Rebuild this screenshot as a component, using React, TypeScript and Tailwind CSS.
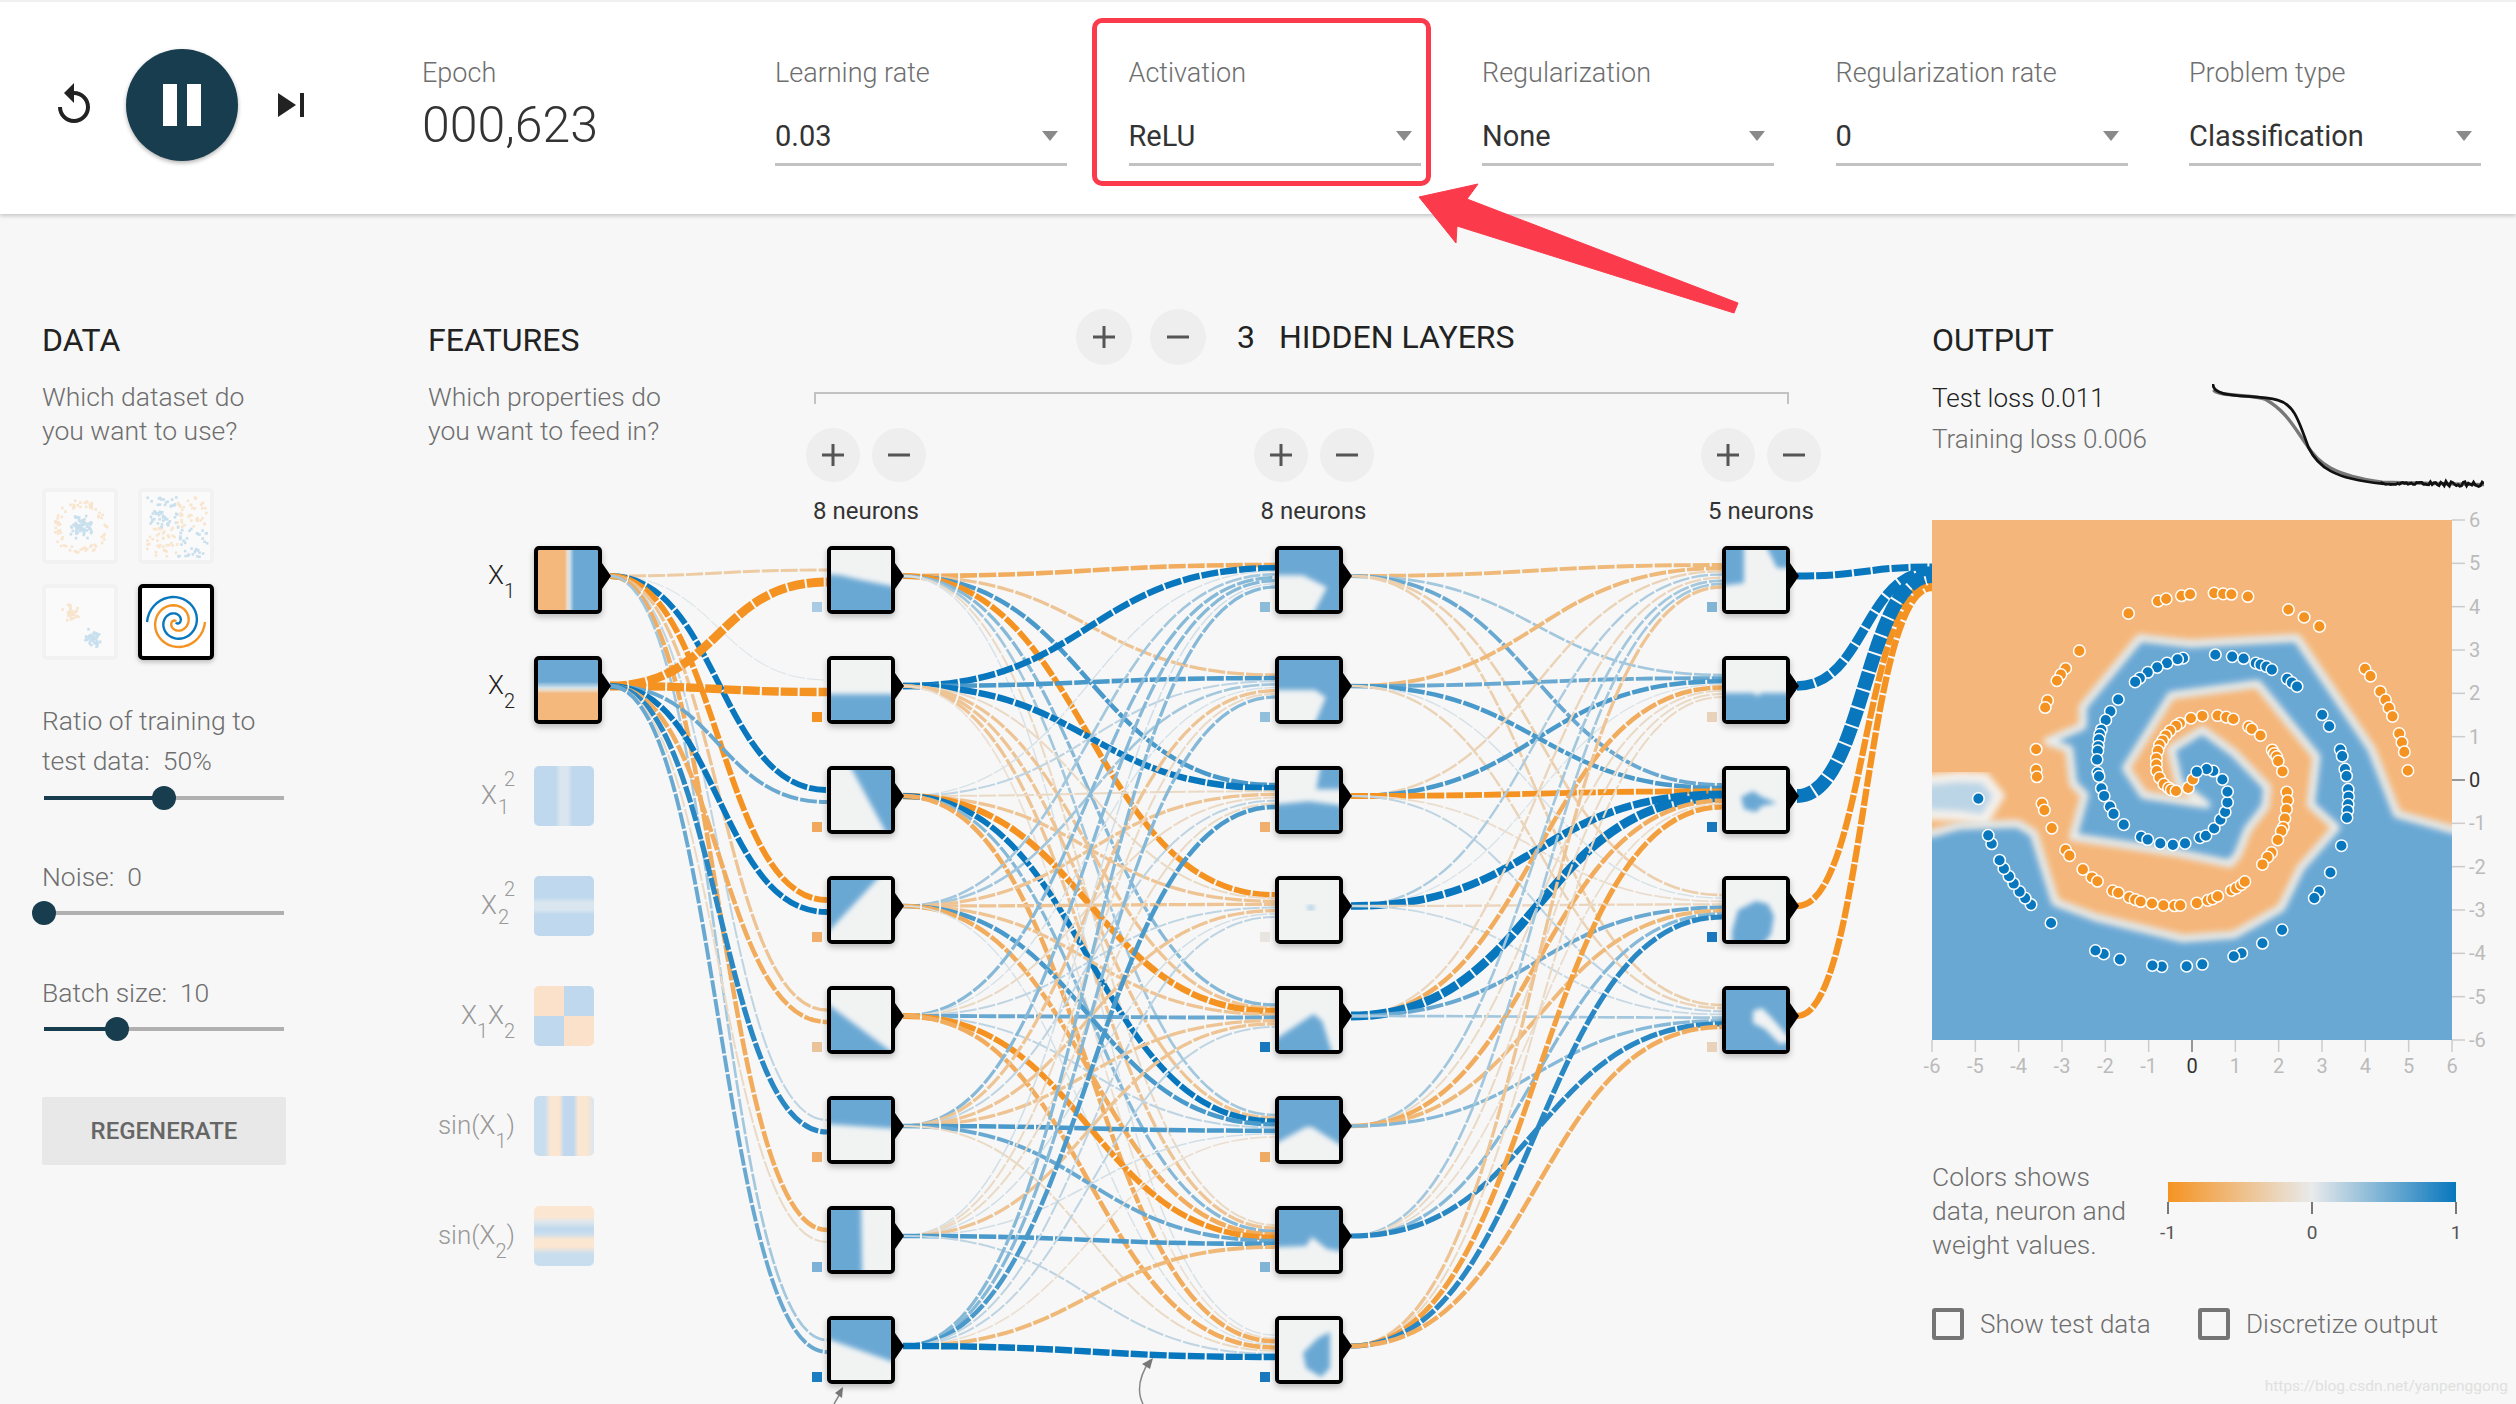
import type { ReactNode } from 'react';

// page coordinates of the network canvas
const OX = 428;
const OY = 530;
const ROWS = [580, 690, 800, 910, 1020, 1130, 1240, 1350];
const COLS = [827, 1275, 1722];
const ORANGE = [245, 147, 34];
const BLUE = [8, 119, 189];
const GREY = [232, 234, 235];

const weightsIn = [
  [-1.7, 0.3, 4, -4, -2, 1, -3, 1.5],
  [-6.5, -6, 2.5, 4, -3, 3.5, -1, 2.5],
];
const weightsA = [
  [-3, -2, 3, -4, 2, 1.5, -1, 0.5],
  [4.5, 3, 4.5, -1, -2, -2, -2, -0.7],
  [0.5, 1, -1, -2, -4.5, 4, 2, -3],
  [1.5, 1.5, -2, -2, -2, 3, -3, 0.5],
  [2, 0.5, -1, 1, 2.5, 1, -4, -3],
  [2, -2, 1, -2, -2, 3, 2.5, -1],
  [0.6, -1, -1, 0.6, -2, 0.6, 3, 1],
  [2, 2, 3, 1, 1, -0.7, -2.5, 4.5],
];
const weightsB = [
  [-2.5, 1.5, 2.5, -1.5, -1.5],
  [-2.5, 2.5, 3, 0.5, -1.3],
  [-1.3, 3, -4, -0.8, 1],
  [1.3, 0.4, 5.5, -1.2, 0.8],
  [-1.2, -3, 6.5, 2.5, 1.5],
  [1.5, -1, -3, -2.5, 2],
  [1.5, -1, -0.8, 2, 3.5],
  [-2, -1, -3.5, 3.5, -3],
];

const firstCol = [
  { bias: 'bg-[#a9cbe3]', poly: '0,40 15,42 50,50 100,62 100,100 0,100' },
  { bias: 'bg-[#f59322]', poly: '0,57 100,57 100,100 0,100' },
  { bias: 'bg-[#f0a85f]', poly: '30,0 100,0 100,100 95,100' },
  { bias: 'bg-[#f0ae6a]', poly: '0,0 85,0 0,92' },
  { bias: 'bg-[#e9c49b]', poly: '0,20 100,100 0,100' },
  { bias: 'bg-[#f0ae6a]', poly: '0,0 100,0 100,48 0,40' },
  { bias: 'bg-[#7db1d7]', poly: '0,0 50,0 52,100 0,100' },
  { bias: 'bg-[#1a7ec0]', poly: '0,0 100,0 100,72 0,30' },
];
const secondCol = [
  { bias: 'bg-[#8dbcd9]', poly: '0,42 40,42 80,62 55,100 0,100', invert: true },
  { bias: 'bg-[#92bfdc]', poly: '0,50 60,50 78,62 58,100 0,100', invert: true },
  { bias: 'bg-[#efb06f]', poly: '0,58 50,52 100,60 100,100 0,100', extra: '70,0 100,0 100,32 62,32' },
  { bias: 'bg-[#e8e4df]', poly: '46,46 53,43 60,46 53,50' },
  { bias: 'bg-[#1877bd]', poly: '0,85 50,45 58,40 72,52 90,100 0,100' },
  { bias: 'bg-[#efab64]', poly: '0,75 45,45 55,45 100,80 100,100 0,100', invert: true },
  { bias: 'bg-[#82b4d6]', poly: '0,0 100,0 100,70 80,65 55,45 45,60 0,62' },
  { bias: 'bg-[#1877bd]', poly: '40,55 65,30 85,20 85,80 70,95 45,80' },
];
const thirdCol = [
  { bias: 'bg-[#82b4d6]', poly: '0,0 30,0 30,55 0,60', extra: '65,0 100,0 100,30 85,30' },
  { bias: 'bg-[#e8d2ba]', poly: '0,55 45,55 52,60 60,55 100,55 100,100 0,100' },
  { bias: 'bg-[#1877bd]', poly: '25,45 45,35 60,45 85,55 60,60 50,70 30,65' },
  { bias: 'bg-[#1877bd]', poly: '10,85 20,50 50,35 70,40 80,60 75,90 60,100 10,100' },
  { bias: 'bg-[#e8d2ba]', poly: '45,35 60,30 75,45 100,85 90,90 65,65 45,55', invert: true },
];

const inactive = [
  { cy: 796, bg: 'bg-[linear-gradient(to_right,#c0d8ed_36%,#d9e6ef_44%,#d9e6ef_56%,#c0d8ed_64%)]' },
  { cy: 906, bg: 'bg-[linear-gradient(to_bottom,#c0d8ed_36%,#d9e6ef_44%,#d9e6ef_56%,#c0d8ed_64%)]' },
  { cy: 1016, bg: 'bg-[conic-gradient(#c0d8ed_0_25%,#fbe1c9_25%_50%,#c0d8ed_50%_75%,#fbe1c9_75%)]' },
  { cy: 1126, bg: 'bg-[linear-gradient(to_right,#c8deef_18%,#fbe6d2_28%,#fbe6d2_42%,#c0d8ed_50%,#c0d8ed_66%,#fbe6d2_74%,#fbe6d2_88%,#d8e6ef_100%)]' },
  { cy: 1236, bg: 'bg-[linear-gradient(to_bottom,#fbe6d2_18%,#dfe7ec_26%,#c0d8ed_38%,#c8deef_46%,#fbe6d2_56%,#fbe6d2_68%,#c8deef_80%,#c8deef_100%)]' },
];

const orangeDots = [
  [581,296],[656,264],[677,258],[716,250],[738,246],[799,243],[822,245],[843,246],[885,252],[988,286],[1028,306],[1067,330],[1183,441],[1197,460],[1222,500],[1235,522],[1244,543],[1253,565],[1270,610],[1277,633],[1283,658],[1292,707],
  [456,394],[421,440],[409,456],[399,472],[375,524],[369,542],[346,651],[346,705],[348,723],[361,793],[367,810],[386,857],[421,914],[431,929],[465,965],[488,986],[502,996],[541,1021],[555,1026],[583,1038],[598,1044],[612,1049],[641,1054],[670,1059],[698,1060],[713,1059],[755,1053],[783,1046],[795,1042],[808,1035],[843,1020],[855,1014],[868,1005],[877,997],
  [769,564],[740,570],[808,563],[830,567],[848,572],[887,592],[895,598],[917,615],[947,653],[952,662],[958,670],[962,682],[973,709],[984,763],[986,785],[983,808],[979,832],[975,855],[970,865],[961,888],[945,921],[935,933],[922,952],[712,583],[702,590],[687,603],[676,615],[668,628],[660,640],[656,655],[652,675],[652,691],[653,708],[660,725],[671,742],[683,752],[690,757],[702,760],[733,752],[745,730],
];
const blueDots = [
  [802,404],[845,409],[874,414],[905,426],[917,430],[932,435],[946,443],[985,467],[997,477],[1010,487],[1074,561],[1092,591],[1120,652],[1125,669],[1132,703],[1136,721],[1140,756],[1141,775],[1140,795],[1139,811],[1137,830],[1123,903],[1095,973],[1066,1023],[1054,1040],[972,1123],[922,1158],[869,1184],[849,1192],[769,1213],[729,1218],[666,1219],[642,1216],[559,1200],[518,1186],[497,1177],[384,1105],[333,1057],[318,1040],[304,1023],[289,1002],[277,983],[264,963],[253,941],[233,898],[224,876],[199,780],
  [720,413],[706,416],[679,426],[654,437],[630,450],[610,465],[598,475],[555,521],[535,552],[523,575],[512,600],[508,612],[506,625],[504,643],[503,655],[501,678],[503,712],[506,722],[512,753],[519,773],[534,801],[543,820],[569,848],[613,880],[630,887],[662,897],[694,901],[725,897],[763,882],[778,877],[799,858],[815,835],[827,815],[833,790],[833,762],[820,730],[797,708],[780,703],[755,710],
];
const HEAT_BLUE =
  '-40,1500 -40,880 81,870 150,850 300,845 340,870 395,1050 500,1090 720,1145 850,1135 970,1065 1020,960 1110,855 1045,795 1060,670 910,480 690,510 575,700 620,770 780,795 710,740 690,650 770,600 850,660 935,750 930,800 885,860 860,925 840,950 700,920 440,880 470,770 440,740 430,650 375,630 465,590 465,540 610,360 740,375 1010,360 1200,650 1265,820 1405,860 1500,880 1500,1500';

function rng(seed: number) {
  let s = seed;
  return () => {
    s = (s * 16807) % 2147483647;
    return (s - 1) / 2147483646;
  };
}

function mix(w: number) {
  const base = w < 0 ? ORANGE : BLUE;
  const t = Math.min(Math.pow(Math.abs(w) / 4, 1.2), 1);
  const c = base.map((v, i) => Math.round(GREY[i] + (v - GREY[i]) * t));
  return `rgb(${c[0]},${c[1]},${c[2]})`;
}

function Link({ x1, y1, x2, y2, w }: { x1: number; y1: number; x2: number; y2: number; w: number }) {
  const mx = (x1 + x2) / 2;
  return (
    <path
      d={`M${x1} ${y1}C${mx} ${y1},${mx} ${y2},${x2} ${y2}`}
      fill="none"
      stroke={mix(w)}
      strokeWidth={0.8 + Math.abs(w) * 1.25}
      strokeDasharray="17 2"
    />
  );
}

function NetworkLinks() {
  const links: ReactNode[] = [];
  [580, 690].forEach((cy, i) => {
    weightsIn[i].forEach((w, j) => {
      links.push(<Link key={`i${i}${j}`} x1={610} y1={cy - 4} x2={COLS[0]} y2={ROWS[j] - 10 + i * 12} w={w} />);
    });
  });
  weightsA.forEach((row, i) => {
    row.forEach((w, j) => {
      links.push(
        <Link key={`a${i}${j}`} x1={COLS[0] + 76} y1={ROWS[i] - 4} x2={COLS[1]} y2={ROWS[j] - 15 + (i * 22) / 7} w={w} />
      );
    });
  });
  weightsB.forEach((row, i) => {
    row.forEach((w, j) => {
      links.push(
        <Link key={`b${i}${j}`} x1={COLS[1] + 76} y1={ROWS[i] - 4} x2={COLS[2]} y2={ROWS[j] - 15 + (i * 22) / 7} w={w} />
      );
    });
  });
  const out = [
    { i: 3, y: 583, w: -4.4 },
    { i: 4, y: 588, w: -4.4 },
    { i: 0, y: 567, w: 5 },
    { i: 1, y: 571, w: 7 },
    { i: 2, y: 576, w: 10.5 },
  ];
  out.forEach((o) => {
    links.push(<Link key={`o${o.i}`} x1={COLS[2] + 75} y1={ROWS[o.i] - 4} x2={1932} y2={o.y} w={o.w} />);
  });
  return (
    <svg
      className="absolute left-0 top-0 overflow-visible"
      width={1504}
      height={874}
      viewBox={`${OX} ${OY} 1504 874`}
    >
      <defs>
        <filter id="thumb-blur" x="-20%" y="-20%" width="140%" height="140%">
          <feGaussianBlur stdDeviation="4" />
        </filter>
      </defs>
      {links}
      <path d="M1143 1404C1136 1390 1140 1375 1150 1360" fill="none" stroke="#888" strokeWidth="1.5" />
      <polygon points="1153,1358 1142,1364 1150,1369" fill="#777" />
      <path d="M834 1404L841 1392" fill="none" stroke="#888" strokeWidth="1.5" />
      <polygon points="843,1387 835,1393 842,1398" fill="#777" />
    </svg>
  );
}

function wide(points: string) {
  return points
    .split(' ')
    .map((p) =>
      p
        .split(',')
        .map((v) => (v === '0' ? '-10' : v === '100' ? '110' : v))
        .join(',')
    )
    .join(' ');
}

function Tip({ cy }: { cy: number }) {
  return (
    <svg className="absolute left-full" style={{ top: cy }} width="10" height="26" viewBox="0 0 10 26">
      <polygon points="0,0 9,13 0,26" fill="#000" />
    </svg>
  );
}

type Thumb = { bias: string; poly: string; extra?: string; invert?: boolean };

function HiddenNode({ x, cy, node }: { x: number; cy: number; node: Thumb }) {
  return (
    <div className="absolute h-[68px] w-[68px]" style={{ left: x - OX, top: cy - 34 - OY }}>
      <div className={`absolute bottom-[2px] left-[-15px] h-[10px] w-[10px] ${node.bias}`} />
      <div className="h-full w-full overflow-hidden rounded-[5px] border-[4px] border-black bg-[#f1f3f3] shadow-[0_3px_6px_rgba(0,0,0,0.25)]">
        <svg width="60" height="60" viewBox="0 0 100 100" className="block">
          <rect width="100" height="100" fill={node.invert ? '#6ba8d4' : '#f1f3f3'} />
          <polygon
            points={wide(node.poly)}
            fill={node.invert ? '#f1f3f3' : '#6ba8d4'}
            filter="url(#thumb-blur)"
          />
          {node.extra && <polygon points={wide(node.extra)} fill="#6ba8d4" filter="url(#thumb-blur)" />}
        </svg>
      </div>
      <Tip cy={17} />
    </div>
  );
}

function Sub({ children, low = 16, left = 0 }: { children: ReactNode; low?: number; left?: number }) {
  return (
    <span className="relative text-[20px]" style={{ top: low, left }}>
      {children}
    </span>
  );
}

function FeatureLabel({ cy, active, children }: { cy: number; active?: boolean; children: ReactNode }) {
  return (
    <div
      className={`absolute flex h-[40px] w-[100px] items-center justify-end whitespace-nowrap text-[26px] leading-none ${
        active ? 'text-[#222]' : 'text-[#999]'
      }`}
      style={{ left: 415 - OX, top: cy - 20 - OY - 5 }}
    >
      {children}
    </div>
  );
}

function Stacked({ sub }: { sub: string }) {
  return (
    <span className="relative inline-block h-[40px] w-[18px] text-[20px]">
      <span className="absolute right-0 top-[-6px]">2</span>
      <span className="absolute left-[1px] top-[22px]">{sub}</span>
    </span>
  );
}

function Features() {
  return (
    <>
      <FeatureLabel cy={580} active>
        X<Sub>1</Sub>
      </FeatureLabel>
      <FeatureLabel cy={690} active>
        X<Sub>2</Sub>
      </FeatureLabel>
      <FeatureLabel cy={800}>
        X<Stacked sub="1" />
      </FeatureLabel>
      <FeatureLabel cy={910}>
        X<Stacked sub="2" />
      </FeatureLabel>
      <FeatureLabel cy={1020}>
        X<Sub>1</Sub>X<Sub>2</Sub>
      </FeatureLabel>
      <FeatureLabel cy={1130}>
        sin(X<Sub>1</Sub>)
      </FeatureLabel>
      <FeatureLabel cy={1240}>
        sin(X<Sub>2</Sub>)
      </FeatureLabel>
      {[580, 690].map((cy) => (
        <div key={cy} className="absolute h-[68px] w-[68px]" style={{ left: 534 - OX, top: cy - 34 - OY }}>
          <div
            className={`h-full w-full rounded-[5px] border-[4px] border-black shadow-[0_3px_6px_rgba(0,0,0,0.25)] ${
              cy === 580
                ? 'bg-[linear-gradient(to_right,#f4b77c_44%,#ebdccb_49%,#cfe0ea_53%,#6ba8d4_60%)]'
                : 'bg-[linear-gradient(to_bottom,#6ba8d4_36%,#cfe0ea_46%,#ebdccb_50%,#f4b77c_56%)]'
            }`}
          />
          <Tip cy={17} />
        </div>
      ))}
      {inactive.map((f) => (
        <div
          key={f.cy}
          className={`absolute h-[60px] w-[60px] rounded-[5px] ${f.bg}`}
          style={{ left: 534 - OX, top: f.cy - 30 - OY }}
        />
      ))}
    </>
  );
}

function Slider({ value }: { value: number }) {
  return (
    <div className="relative ml-[2px] h-[24px] w-[240px]">
      <div className="absolute left-0 right-0 top-[10px] h-[4px] bg-[#b0b0b0]" />
      <div className="absolute left-0 top-[10px] h-[4px] bg-[#183d4e]" style={{ width: value }} />
      <div className="absolute top-0 h-[24px] w-[24px] rounded-full bg-[#183d4e]" style={{ left: value - 12 }} />
    </div>
  );
}

function Select({ label, value, children }: { label: string; value: string; children?: ReactNode }) {
  return (
    <div className="relative w-[292px] pt-[51px]">
      {children}
      <div className="h-[40px] text-[27px] leading-[40px] text-[#6e6e6e]">{label}</div>
      <div className="mt-[23px] flex h-[50px] items-center justify-between border-b-[3px] border-[#c2c2c2] pb-[7px] pr-[9px]">
        <span className="text-[29px] font-normal leading-none text-[#333]">{value}</span>
        <svg width="16" height="10" viewBox="0 0 16 10">
          <polygon points="0,0 16,0 8,10" fill="#8a8a8a" />
        </svg>
      </div>
    </div>
  );
}

function RoundButton({ sign, size }: { sign: 'plus' | 'minus'; size: string }) {
  return (
    <div className={`flex items-center justify-center rounded-full bg-[#eeeeee] ${size}`}>
      <svg width="26" height="26" viewBox="0 0 26 26">
        <rect x="2" y="11.5" width="22" height="3" fill="#555" />
        {sign === 'plus' && <rect x="11.5" y="2" width="3" height="22" fill="#555" />}
      </svg>
    </div>
  );
}

function LayerControl({ count }: { count: string }) {
  return (
    <div className="flex w-[132px] shrink-0 flex-col items-center">
      <div className="flex gap-[12px]">
        <RoundButton sign="plus" size="h-[54px] w-[54px]" />
        <RoundButton sign="minus" size="h-[54px] w-[54px]" />
      </div>
      <div className="mt-[15px] text-[24px] font-normal leading-[28px] text-[#333]">{count}</div>
    </div>
  );
}

function DataThumb({ kind }: { kind: 'circle' | 'xor' | 'gauss' | 'spiral' }) {
  const r = rng(kind.length * 97 + 11);
  const dots: { x: number; y: number; c: string }[] = [];
  if (kind === 'circle') {
    for (let i = 0; i < 150; i++) {
      const a = r() * Math.PI * 2;
      const inner = i % 2 === 0;
      const d = inner ? r() * 13 : 20 + r() * 7;
      dots.push({ x: 33 + d * Math.cos(a), y: 34 + d * Math.sin(a), c: inner ? '#0877bd' : '#f59322' });
    }
  }
  if (kind === 'xor') {
    for (let i = 0; i < 170; i++) {
      const x = 4 + r() * 60;
      const y = 4 + r() * 60;
      dots.push({ x, y, c: (x < 34) === (y < 34) ? '#0877bd' : '#f59322' });
    }
  }
  if (kind === 'gauss') {
    for (let i = 0; i < 90; i++) {
      const a = r() * Math.PI * 2;
      const d = r() * 10;
      const left = i % 2 === 0;
      dots.push({
        x: (left ? 24 : 46) + d * Math.cos(a),
        y: (left ? 24 : 48) + d * Math.sin(a),
        c: left ? '#f59322' : '#0877bd',
      });
    }
  }
  if (kind === 'spiral') {
    const arm = (delta: number) =>
      Array.from({ length: 70 }, (_, i) => {
        const p = (i + 1) / 70;
        const t = 1.75 * p * 2 * Math.PI + delta;
        return `${34 + 29 * p * Math.sin(t)},${34 + 29 * p * Math.cos(t)}`;
      }).join(' ');
    return (
      <div className="h-[76px] w-[76px] rounded-[5px] border-[4px] border-black bg-white shadow-[0_2px_5px_rgba(0,0,0,0.25)]">
        <svg width="68" height="68" viewBox="0 0 68 68">
          <polyline points={arm(0)} fill="none" stroke="#0877bd" strokeWidth="2.4" />
          <polyline points={arm(Math.PI)} fill="none" stroke="#f59322" strokeWidth="2.4" />
        </svg>
      </div>
    );
  }
  return (
    <div className="h-[76px] w-[76px] rounded-[5px] border-[4px] border-[#f2f2f2] bg-[#fafafa]">
      <svg width="68" height="68" viewBox="0 0 68 68" opacity="0.2">
        {dots.map((d, i) => (
          <rect key={i} x={d.x} y={d.y} width="2.6" height="2.6" fill={d.c} />
        ))}
      </svg>
    </div>
  );
}

function LossChart() {
  const r = rng(41);
  const noise = Array.from({ length: 60 }, (_, i) => {
    const x = 1400 + i * 2.15;
    const amp = 4 + (i / 60) * 16;
    return `L${x} ${1449 + (r() - 0.5) * amp}`;
  }).join('');
  return (
    <svg width="272" height="105" viewBox="1188 1152 339 313" preserveAspectRatio="none" className="mt-[6px] block">
      <path
        d="M1190 1170C1194 1190 1240 1182 1255 1198C1280 1232 1290 1280 1305 1330C1320 1390 1340 1425 1400 1445L1527 1452"
        fill="none"
        stroke="#777"
        strokeWidth="3.4"
        vectorEffect="non-scaling-stroke"
      />
      <path
        d={`M1189 1152C1190 1200 1240 1180 1270 1200C1290 1212 1296 1260 1308 1340C1320 1400 1340 1435 1400 1449${noise}`}
        fill="none"
        stroke="#111"
        strokeWidth="2.8"
        vectorEffect="non-scaling-stroke"
      />
    </svg>
  );
}

const px = (zx: number) => (zx - 81) / 2.545;
const py = (zy: number) => (zy - 52) / 2.613;

function HeatMap() {
  const ticks = [-6, -5, -4, -3, -2, -1, 0, 1, 2, 3, 4, 5, 6];
  return (
    <svg width="584" height="562" viewBox="0 0 584 562" className="block overflow-visible">
      <defs>
        <filter id="heat-soft" x="-10%" y="-10%" width="120%" height="120%">
          <feGaussianBlur stdDeviation="8" />
        </filter>
        <filter id="heat-edge" x="-10%" y="-10%" width="120%" height="120%">
          <feGaussianBlur stdDeviation="8" />
        </filter>
      </defs>
      <svg x="0" y="0" width="520" height="520" viewBox="81 52 1324 1358" preserveAspectRatio="none">
        <rect x="0" y="0" width="1500" height="1500" fill="#f4b67a" />
        <polygon
          points="20,735 150,722 215,725 252,772 215,835 150,825 20,820"
          fill="#bcd5e6"
          stroke="#f4f1ec"
          strokeWidth="26"
          filter="url(#heat-edge)"
        />
        <polygon points={HEAT_BLUE} fill="#6ba8d4" filter="url(#heat-soft)" />
        <polygon
          points={HEAT_BLUE}
          fill="none"
          stroke="#f3f4f3"
          strokeWidth="20"
          strokeLinejoin="round"
          filter="url(#heat-edge)"
          opacity="0.9"
        />
      </svg>
      {[
        { pts: orangeDots, c: '#f59322' },
        { pts: blueDots, c: '#0877bd' },
      ].map((g) =>
        g.pts.map((p, i) => (
          <circle key={`${g.c}${i}`} cx={px(p[0])} cy={py(p[1])} r="5.8" fill={g.c} stroke="#fff" strokeWidth="1.5" />
        ))
      )}
      {ticks.map((t, i) => {
        const pos = (i * 520) / 12;
        const c = t === 0 ? '#333' : '#bbbbbb';
        return (
          <g key={t} fontSize="20" fontWeight="400">
            <line x1={pos} x2={pos} y1="520" y2="532" stroke={t === 0 ? '#777' : '#ccc'} strokeWidth="1.5" />
            <text x={pos} y="553" textAnchor="middle" fill={c}>
              {t}
            </text>
            <line x1="520" x2="533" y1={520 - pos} y2={520 - pos} stroke={t === 0 ? '#777' : '#ccc'} strokeWidth="1.5" />
            <text x="537" y={527 - pos} fill={c}>
              {t}
            </text>
          </g>
        );
      })}
    </svg>
  );
}

function Check({ label, width }: { label: string; width: string }) {
  return (
    <div className={`flex items-center gap-[16px] ${width}`}>
      <div className="h-[32px] w-[32px] rounded-[3px] border-[4px] border-[#757575]" />
      <span className="text-[26px] leading-none text-[#6e6e6e]">{label}</span>
    </div>
  );
}

export default function App() {
  return (
    <div className="relative h-[1404px] w-[2516px] overflow-hidden bg-[#f7f7f7] font-['Roboto',sans-serif] font-light text-[#333]">
      <header className="relative flex h-[214px] border-t-2 border-[#f0f0f0] bg-white shadow-[0_2px_4px_rgba(0,0,0,0.2)]">
        <div className="ml-[50px] flex h-[206px] w-[254px] items-center">
          <svg width="48" height="48" viewBox="0 0 24 24" className="shrink-0">
            <path
              fill="#222"
              d="M12 5V1L7 6l5 5V7c3.31 0 6 2.69 6 6s-2.69 6-6 6-6-2.69-6-6H4c0 4.42 3.58 8 8 8s8-3.58 8-8-3.58-8-8-8z"
            />
          </svg>
          <div className="ml-[28px] flex h-[112px] w-[112px] shrink-0 items-center justify-center gap-[10px] rounded-full bg-[#183d4e] shadow-[0_2px_4px_rgba(0,0,0,0.3)]">
            <div className="h-[42px] w-[14px] bg-white" />
            <div className="h-[42px] w-[14px] bg-white" />
          </div>
          <svg width="26" height="24" viewBox="0 0 26 24" className="ml-[40px] shrink-0">
            <polygon points="0,0 18,12 0,24" fill="#222" />
            <rect x="22" y="0" width="4" height="24" fill="#222" />
          </svg>
        </div>
        <div className="ml-[118px] w-[353px] pt-[51px]">
          <div className="h-[40px] text-[27px] leading-[40px] text-[#6e6e6e]">Epoch</div>
          <div className="mt-[2px] text-[50px] leading-[60px] text-[#333]">000,623</div>
        </div>
        <div className="flex gap-[61.5px]">
          <Select label="Learning rate" value="0.03" />
          <Select label="Activation" value="ReLU">
            <div className="absolute left-[-37px] top-[16px] h-[168px] w-[339px] rounded-[10px] border-[5px] border-[#fb3a4b]" />
          </Select>
          <Select label="Regularization" value="None" />
          <Select label="Regularization rate" value="0" />
          <Select label="Problem type" value="Classification" />
        </div>
      </header>

      <main className="flex h-[1190px]">
        <section className="w-[428px] shrink-0 pl-[42px] pt-[106px]">
          <h2 className="text-[32px] font-normal leading-[40px] text-[#222]">DATA</h2>
          <p className="mt-[20px] text-[26.5px] leading-[34px] text-[#6e6e6e]">
            Which dataset do
            <br />
            you want to use?
          </p>
          <div className="mt-[40px] grid w-[172px] grid-cols-2 gap-[20px]">
            <DataThumb kind="circle" />
            <DataThumb kind="xor" />
            <DataThumb kind="gauss" />
            <DataThumb kind="spiral" />
          </div>
          <p className="mt-[41px] text-[26.5px] leading-[40px] text-[#6e6e6e]">
            Ratio of training to
            <br />
            test data:&nbsp; 50%
          </p>
          <div className="mt-[5px]">
            <Slider value={120} />
          </div>
          <p className="mt-[47px] text-[26.5px] leading-[40px] text-[#6e6e6e]">Noise:&nbsp; 0</p>
          <div className="mt-[4px]">
            <Slider value={0} />
          </div>
          <p className="mt-[48px] text-[26.5px] leading-[40px] text-[#6e6e6e]">Batch size:&nbsp; 10</p>
          <div className="mt-[4px]">
            <Slider value={73} />
          </div>
          <div className="mt-[56px] flex h-[68px] w-[244px] items-center justify-center rounded-[2px] bg-[#e8e8e8] text-[24px] font-medium text-[#666]">
            REGENERATE
          </div>
        </section>

        <section className="w-[1504px] shrink-0">
          <div className="flex h-[316px]">
            <div className="w-[372px] shrink-0 pt-[106px]">
              <h2 className="text-[32px] font-normal leading-[40px] text-[#222]">FEATURES</h2>
              <p className="mt-[20px] text-[26.5px] leading-[34px] text-[#6e6e6e]">
                Which properties do
                <br />
                you want to feed in?
              </p>
            </div>
            <div className="w-[1132px] shrink-0 pt-[95px]">
              <div className="ml-[276px] flex items-center">
                <RoundButton sign="plus" size="h-[56px] w-[56px]" />
                <RoundButton sign="minus" size="ml-[18px] h-[56px] w-[56px]" />
                <span className="ml-[31px] text-[32px] font-normal leading-none text-[#222]">3</span>
                <span className="ml-[24px] text-[32px] font-normal leading-none text-[#222]">HIDDEN LAYERS</span>
              </div>
              <div className="ml-[14px] mt-[27px] h-[12px] w-[975px] border-x-2 border-t-2 border-[#c2c2c2]" />
              <div className="mt-[24px] flex gap-[315.5px]">
                <LayerControl count="8 neurons" />
                <LayerControl count="8 neurons" />
                <LayerControl count="5 neurons" />
              </div>
            </div>
          </div>
          <div className="relative h-[874px]">
            <NetworkLinks />
            <Features />
            {ROWS.map((cy, i) => (
              <HiddenNode key={cy} x={COLS[0]} cy={cy} node={firstCol[i]} />
            ))}
            {ROWS.map((cy, i) => (
              <HiddenNode key={cy} x={COLS[1]} cy={cy} node={secondCol[i]} />
            ))}
            {ROWS.slice(0, 5).map((cy, i) => (
              <HiddenNode key={cy} x={COLS[2]} cy={cy} node={thirdCol[i]} />
            ))}
          </div>
        </section>

        <section className="relative w-[584px] shrink-0 pt-[106px]">
          <h2 className="text-[32px] font-normal leading-[40px] text-[#222]">OUTPUT</h2>
          <div className="mt-[18px] flex h-[110px]">
            <div className="w-[280px] text-[26px] leading-[41px]">
              <div className="text-[#222]">Test loss 0.011</div>
              <div className="text-[#6e6e6e]">Training loss 0.006</div>
            </div>
            <LossChart />
          </div>
          <div className="mt-[32px]">
            <HeatMap />
          </div>
          <div className="mt-[78px] flex">
            <p className="w-[236px] text-[26.5px] leading-[34px] text-[#6e6e6e]">
              Colors shows
              <br />
              data, neuron and
              <br />
              weight values.
            </p>
            <div className="mt-[22px] w-[288px]">
              <div className="h-[20px] bg-[linear-gradient(to_right,#f59322,#e8eaeb_50%,#0877bd)]" />
              <div className="flex justify-between text-[19px] font-normal text-[#555]">
                {['-1', '0', '1'].map((t) => (
                  <div key={t} className="flex w-0 flex-col items-center">
                    <div className="h-[12px] w-[2px] shrink-0 bg-[#777]" />
                    <span className="mt-[7px] leading-[24px]">{t}</span>
                  </div>
                ))}
              </div>
            </div>
          </div>
          <div className="mt-[46px] flex">
            <Check label="Show test data" width="w-[266px]" />
            <Check label="Discretize output" width="" />
          </div>
        </section>
      </main>

      <svg className="absolute left-0 top-0" width="2516" height="400" viewBox="0 0 2516 400">
        <polygon
          points="1419,197 1478,184 1467,199 1738,303 1734,313 1457,226 1456,243"
          fill="#fb3a4b"
          stroke="#fb3a4b"
          strokeLinejoin="round"
        />
      </svg>
      <div className="absolute bottom-[6px] right-[8px] text-[15.5px] font-normal text-[#e0e0e0]">
        https://blog.csdn.net/yanpenggong
      </div>
    </div>
  );
}
